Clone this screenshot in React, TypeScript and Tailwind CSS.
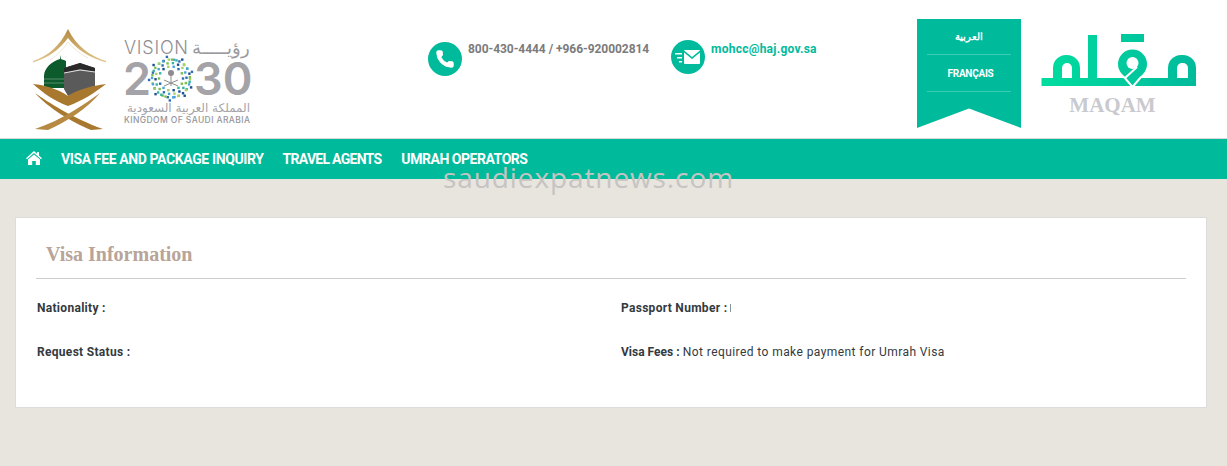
import React from 'react';
import { Phone } from 'lucide-react';

const ui = "font-['Roboto',sans-serif]";

// dots for the emblem inside the 2030 logo
const dotColors = ['#2e6db4', '#7cc04b', '#33b5a5', '#1c4f8f', '#a5d16b', '#4aa3d8'];
const emblemDots: { x: number; y: number; c: string; s: number }[] = [];
[12, 15.5, 19, 22].forEach((r, ring) => {
  const count = 14 + ring * 4;
  for (let i = 0; i < count; i++) {
    const a = (i / count) * Math.PI * 2 + ring * 0.3;
    const wave = ring === 3 ? (i % 3 === 0 ? 1 : 0.86) : 1;
    emblemDots.push({
      x: 171 + Math.cos(a) * r * wave,
      y: 78.5 + Math.sin(a) * r * wave,
      c: dotColors[(i + ring) % dotColors.length],
      s: 2.4
    });
  }
});

const VisionLogo = () => (
  <svg width="232" height="108" viewBox="28 26 232 108" className="block">
    <defs>
      <linearGradient id="tent-grad" x1="0" x2="0" y1="0" y2="1">
        <stop offset="0" stopColor="#b58a3f" />
        <stop offset="1" stopColor="#e8cf98" />
      </linearGradient>
    </defs>
    {/* tent */}
    <path d="M33 67 V61 C48 56 60 46 68 29 C76 46 90 56 106 61 V67 V62.5 C90 58 76 49 68 38 C60 49 48 58 33 62.5 Z" fill="url(#tent-grad)" />
    <path d="M50 60 C58 55 64 48 68 42 C73 48 80 54 88 58" fill="none" stroke="#f0e8d8" strokeWidth="1" />
    {/* green dome */}
    <path d="M44 88 V76 C44 68 52 61 60 59 L60.5 55 L61 59 C62 59.5 64 60 66 61 V88 Z" fill="#0d5a2c" />
    <path d="M44 79 H64 M44 83 H64" stroke="#6d9b7b" strokeWidth="0.8" />
    {/* kaaba */}
    <path d="M64 68 L80 63 L95 68 V86 L68 96 L64 89 Z" fill="#5b5a5b" />
    <path d="M64 68 L80 63 L95 68 V72 L80 69 L64 73 Z" fill="#2b2a2b" />
    <path d="M64 73 L80 70 L95 72" fill="none" stroke="#e4e4e4" strokeWidth="1" />
    {/* open book */}
    <path d="M33 84 C45 85 58 89 68 96 C78 89 92 86 106 84 C96 92 82 101 68 106 C54 101 42 92 33 84 Z" fill="#a9782f" />
    <path d="M35 93 C48 102 72 118 103 129 L91 130 C72 122 48 108 35 93 Z" fill="#a9782f" />
    <path d="M100 93 C85 104 62 120 35 129 L48 130 C66 122 88 108 100 93 Z" fill="#b68a42" />
    {/* vision 2030 */}
    <text x="124" y="54" fontFamily="Inter, sans-serif" fontWeight="300" fontSize="18" fill="#8f8f94" textLength="64">VISION</text>
    <text x="250" y="54" textAnchor="start" direction="rtl" fontFamily="'DejaVu Sans', sans-serif" fontWeight="300" fontSize="18" fill="#9a9a9f">رؤيـــــة</text>
    <text x="123" y="95" fontFamily="Inter, sans-serif" fontWeight="600" fontSize="45" fill="#a3a3a8">2</text>
    <text x="194" y="95" fontFamily="Inter, sans-serif" fontWeight="600" fontSize="45" fill="#a3a3a8">30</text>
    {emblemDots.map((d, i) => (
      <rect key={i} x={d.x - d.s / 2} y={d.y - d.s / 2} width={d.s} height={d.s} fill={d.c} />
    ))}
    <path d="M171 74 V86 M164 86 L178 80 M164 80 L178 86" stroke="#8c8c8c" strokeWidth="1" />
    <circle cx="171" cy="73" r="3" fill="#8c8c8c" />
    <text x="250" y="112" textAnchor="start" direction="rtl" fontFamily="'DejaVu Sans', sans-serif" fontSize="12" fill="#a5a5a9">المملكة العربية السعودية</text>
    <text x="124" y="123" fontFamily="Inter, sans-serif" fontWeight="500" fontSize="8.5" fill="#96969a" textLength="126">KINGDOM OF SAUDI ARABIA</text>
  </svg>
);

const MaqamLogo = () => (
  <svg width="156" height="54" viewBox="1041 33 156 54" className="block">
    <defs>
      <linearGradient id="maqam-grad" gradientUnits="userSpaceOnUse" x1="1041" x2="1196" y1="0" y2="0">
        <stop offset="0" stopColor="#00dd9f" />
        <stop offset="1" stopColor="#00ba9c" />
      </linearGradient>
    </defs>
    <g fill="url(#maqam-grad)">
      <rect x="1041.5" y="78" width="154.5" height="8" />
      <path d="M1053 78 V68 A13 13 0 0 1 1066 55 H1067 A13 13 0 0 1 1080 68 V78 Z" />
      <rect x="1088" y="35" width="9" height="44" />
      <rect x="1121" y="34" width="23" height="8" />
      <path d="M1132.5 85 L1122 74 A14.5 14.5 0 1 1 1143 74 Z" />
      <path d="M1168 78 V68 A13 13 0 0 1 1181 55 H1183 A13 13 0 0 1 1196 68 V78 Z" />
    </g>
    <g fill="#fff">
      <path d="M1062 78 V68 A5 5 0 0 1 1072 68 V78 Z" />
      <path d="M1177 78 V68 A5 5 0 0 1 1182 63 H1183 A5 5 0 0 1 1188 68 V78 Z" />
      <circle cx="1132.5" cy="63" r="6" />
    </g>
    <path d="M1137 67 L1125 78 M1124 77 L1132.5 87 L1141 77" fill="none" stroke="#fff" strokeWidth="2" />
  </svg>
);

const App = () => {
  return (
    <div className={`relative min-h-[466px] bg-[#e8e5df] overflow-hidden ${ui}`}>
      {/* Header */}
      <header className="flex h-[139px] bg-white border-b border-[#d8d8d8]">
        <div className="ml-[28px] mt-[26px]">
          <VisionLogo />
        </div>

        <div className="flex items-start gap-[6px] ml-[168px] mt-[42px] w-[243px]">
          <span className="flex items-center justify-center w-[34px] h-[34px] rounded-full bg-[#00ba9c] shrink-0">
            <Phone className="w-[20px] h-[20px] text-white fill-white" strokeWidth={1} />
          </span>
          <span className="text-[12px] leading-[14px] font-bold tracking-[-0.05px] text-[#7b7b7b] whitespace-nowrap">
            800-430-4444 / +966-920002814
          </span>
        </div>

        <div className="flex items-start gap-[6px] mt-[40px] w-[246px]">
          <span className="flex items-center justify-center w-[34px] h-[34px] rounded-full bg-[#00ba9c] shrink-0">
            <svg width="26" height="16" viewBox="0 0 26 16">
              <path d="M9 1.5 L17 8 L25 1.5 A1 1 0 0 0 24 1 H10 A1 1 0 0 0 9 1.5 Z" fill="#fff" />
              <path d="M9 3.5 V14 A1 1 0 0 0 10 15 H24 A1 1 0 0 0 25 14 V3.5 L17 10 Z" fill="#fff" />
              <path d="M0 4 H7 V5.5 H0 Z M2 8 H7 V9.5 H2 Z M4 12 H7 V13.5 H4 Z" fill="#fff" />
            </svg>
          </span>
          <span className="text-[12px] leading-[18px] font-bold tracking-[0.25px] text-[#00ba9c] whitespace-nowrap">
            mohcc@haj.gov.sa
          </span>
        </div>

        {/* Language ribbon */}
        <div className="mt-[19px] w-[104px] h-[109px] bg-[#00ba9c] [clip-path:polygon(0_0,100%_0,100%_100%,50%_82%,0_100%)] px-[10px] text-white text-[10px] font-bold text-center shrink-0">
          <div className="h-[36px] leading-[35px] border-b border-[#3ccdb5]" dir="rtl">العربية</div>
          <div className="h-[37px] leading-[37px] pl-[3px] tracking-[-0.25px] border-b border-[#3ccdb5]">FRANÇAIS</div>
        </div>

        <div className="ml-[20px] mt-[33px] w-[156px] shrink-0">
          <MaqamLogo />
          <div className="mt-[5px] pr-[13px] text-center font-['Liberation_Serif',serif] font-bold text-[21px] leading-[26px] text-[#c9c9ce]">
            MAQAM
          </div>
        </div>
      </header>

      {/* Nav */}
      <nav className="flex items-center h-[40px] bg-[#00ba9c] text-white text-[14px] font-bold whitespace-nowrap">
        <svg className="ml-[26px] mb-[3px]" width="16" height="14" viewBox="0 0 16 14">
          <path d="M8 0 L11 2.7 V1 H13 V4.5 L16 7.2 L15 8.2 L8 2 L1 8.2 L0 7.2 Z" fill="#fff" />
          <path d="M8 3.4 L14 8.6 V14 H9.8 V10 H6.2 V14 H2 V8.6 Z" fill="#fff" />
        </svg>
        <a className="ml-[19px] tracking-[-0.38px]">VISA FEE AND PACKAGE INQUIRY</a>
        <a className="ml-[19px] tracking-[-0.72px]">TRAVEL AGENTS</a>
        <a className="ml-[20px] tracking-[-0.46px]">UMRAH OPERATORS</a>
      </nav>

      {/* Card */}
      <main className="ml-[15px] w-[1192px] mt-[38px] h-[191px] bg-white border border-[#dcdcdc] px-[20px]">
        <h2 className="h-[61px] pt-[24px] pl-[10px] border-b border-[#cccccc] font-['Liberation_Serif',serif] font-bold text-[20px] leading-[24px] text-[#b8a498]">
          Visa Information
        </h2>
        <div className="grid grid-cols-[585px_1fr] gap-y-[30px] mt-[22px] text-[12px] leading-[14px] tracking-[0.3px] text-[#333a40]">
          <div className="pl-[1px] font-bold">Nationality :</div>
          <div className="font-bold">
            Passport Number :
            <span className="inline-block w-[1px] h-[8px] ml-[3px] bg-[#8a93a0]" />
          </div>
          <div className="pl-[1px] font-bold">Request Status :</div>
          <div>
            <span className="font-bold tracking-[0px]">Visa Fees :</span>{' '}
            <span className="tracking-[0.42px]">Not required to make payment for Umrah Visa</span>
          </div>
        </div>
      </main>

      {/* Watermark */}
      <div className="absolute left-[443px] top-[158px] text-[28px] leading-[38px] tracking-[0.9px] text-[#c6c4c2] font-['Open_Sans',sans-serif]">
        saudiexpatnews.com
      </div>
    </div>
  );
};

export default App;
